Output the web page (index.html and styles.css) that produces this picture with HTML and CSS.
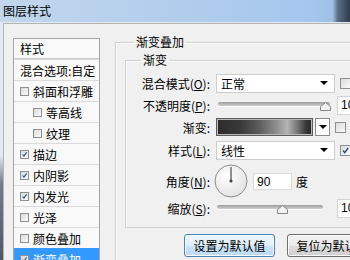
FILE: index.html
```html
<!DOCTYPE html>
<html lang="zh-CN">
<head>
    <meta charset="UTF-8">
    <title>图层样式</title>
    <link rel="stylesheet" href="styles.css">
</head>
<body>
    <div class="window">
        <!-- 标题栏 -->
        <div class="titlebar">图层样式</div>

        <div class="frame">
            <div class="panel">
                <!-- 左侧样式列表 -->
                <div class="side">
                    <div class="styles-list">
                        <div class="list-head">样式</div>
                        <div class="list-item">混合选项:自定</div>
                        <div class="list-item"><span class="cb"></span>斜面和浮雕</div>
                        <div class="list-item sub"><span class="cb"></span>等高线</div>
                        <div class="list-item sub"><span class="cb"></span>纹理</div>
                        <div class="list-item"><span class="cb on"><svg viewBox="0 0 9 9"><path d="M2 4.5 L3.8 6.6 L7.2 1.8"/></svg></span>描边</div>
                        <div class="list-item"><span class="cb on"><svg viewBox="0 0 9 9"><path d="M2 4.5 L3.8 6.6 L7.2 1.8"/></svg></span>内阴影</div>
                        <div class="list-item"><span class="cb on"><svg viewBox="0 0 9 9"><path d="M2 4.5 L3.8 6.6 L7.2 1.8"/></svg></span>内发光</div>
                        <div class="list-item"><span class="cb"></span>光泽</div>
                        <div class="list-item"><span class="cb"></span>颜色叠加</div>
                        <div class="list-item selected"><span class="cb on"><svg viewBox="0 0 9 9"><path d="M2 4.5 L3.8 6.6 L7.2 1.8"/></svg></span>渐变叠加</div>
                    </div>
                </div>

                <!-- 右侧设置 -->
                <div class="main">
                    <fieldset class="group">
                        <legend>渐变叠加</legend>
                        <fieldset class="group inner">
                            <legend>渐变</legend>

                            <div class="row r1">
                                <label class="lbl">混合模式(<u>O</u>):</label>
                                <div class="select"><span>正常</span><i class="arrow"></i></div>
                                <span class="cb big"></span>
                            </div>

                            <div class="row r2">
                                <label class="lbl">不透明度(<u>P</u>):</label>
                                <div class="slider opacity">
                                    <div class="track"></div>
                                    <svg class="thumb" style="left: 102px" viewBox="0 0 11 9"><path d="M5.5 0.5 L10.5 4.5 L10.5 8.5 L0.5 8.5 L0.5 4.5 Z"/></svg>
                                </div>
                                <div class="num first">10</div>
                            </div>

                            <div class="row r3">
                                <label class="lbl">渐变:</label>
                                <div class="swatch"></div>
                                <div class="swatch-btn"><i class="arrow"></i></div>
                                <span class="cb big"></span>
                            </div>

                            <div class="row r4">
                                <label class="lbl">样式(<u>L</u>):</label>
                                <div class="select"><span>线性</span><i class="arrow"></i></div>
                                <span class="cb big on"><svg viewBox="0 0 9 9"><path d="M2 4.5 L3.8 6.6 L7.2 1.8"/></svg></span>
                            </div>

                            <div class="row r5">
                                <label class="lbl">角度(<u>N</u>):</label>
                                <svg class="dial" viewBox="0 0 34 34">
                                    <defs>
                                        <radialGradient id="dialbg" cx="0.4" cy="0.35" r="0.7">
                                            <stop offset="0" stop-color="#ffffff"/>
                                            <stop offset="1" stop-color="#e2e2e2"/>
                                        </radialGradient>
                                    </defs>
                                    <circle cx="17" cy="17" r="16" fill="url(#dialbg)" stroke="#8c8c8c"/>
                                    <line x1="17" y1="17" x2="17" y2="3" stroke="#555" stroke-width="1.3"/>
                                    <circle cx="17" cy="17" r="1.6" fill="#444"/>
                                </svg>
                                <div class="angle">90</div>
                                <span class="unit">度</span>
                            </div>

                            <div class="row r6">
                                <label class="lbl">缩放(<u>S</u>):</label>
                                <div class="slider scale">
                                    <div class="track"></div>
                                    <svg class="thumb" style="left: 60px" viewBox="0 0 11 9"><path d="M5.5 0.5 L10.5 4.5 L10.5 8.5 L0.5 8.5 L0.5 4.5 Z"/></svg>
                                </div>
                                <div class="num">10</div>
                            </div>
                        </fieldset>

                        <div class="buttons">
                            <button class="btn default">设置为默认值</button>
                            <button class="btn">复位为默认值</button>
                        </div>
                    </fieldset>
                </div>
            </div>
        </div>
    </div>
</body>
</html>
```

FILE: styles.css
```css
/* 图层样式对话框 */
html, body {
    margin: 0;
    padding: 0;
    width: 350px;
    height: 260px;
    overflow: hidden;
    font-family: "Noto Sans CJK SC", "Liberation Sans", sans-serif;
    font-size: 12px;
    color: #000;
    background: #f0f0f0;
}

.window {
    width: 350px;
    height: 260px;
    display: flex;
    flex-direction: column;
    overflow: hidden;
}

.titlebar {
    height: 22px;
    line-height: 22px;
    padding-left: 3px;
    flex-shrink: 0;
    background: linear-gradient(90deg, #c2d7ed 0%, #b2cdec 50%, #a5c7ee 88%, #a0c0e6 95%, #5d6f84 96.5%, #2f3d4e 100%);
}

.frame {
    flex: 1;
    padding: 1px 0 0 3px;
    background: linear-gradient(#e4e9ef 0%, #e4e9ef 56%, #737d89 68%, #4f5965 100%);
    display: flex;
    min-height: 0;
}

.panel {
    flex: 1;
    display: flex;
    background: #f0f0f0;
    border-top: 1px solid #b4b4b4;
    border-left: 1px solid #b4b4b4;
    min-width: 0;
}

/* 左侧列表 */
.side {
    width: 87px;
    flex-shrink: 0;
    padding: 14px 0 0 9px;
}

.styles-list {
    border: 1px solid #a5a5a5;
    background: #f9f9f9;
    height: 240px;
}

.list-head {
    height: 19px;
    line-height: 19px;
    padding-left: 6px;
    border-bottom: 1px solid #c9c9c9;
}

.list-item {
    height: 20px;
    border-top: 1px solid #dadada;
    display: flex;
    align-items: center;
    padding-left: 6px;
    white-space: nowrap;
}

.list-item.sub {
    padding-left: 19px;
}

.list-item.selected {
    background: #3399ff;
    color: #fff;
    border-top-color: #3399ff;
}

.cb {
    width: 9px;
    height: 9px;
    box-sizing: border-box;
    border: 1px solid #8e8f8f;
    background: linear-gradient(135deg, #dadada, #fbfbfb);
    margin-right: 4px;
    flex-shrink: 0;
    display: flex;
}

.cb svg {
    width: 100%;
    height: 100%;
}

.cb svg path {
    fill: none;
    stroke: #2a4d7d;
    stroke-width: 1.4;
}

.cb.big {
    width: 11px;
    height: 11px;
    margin: 0 0 0 5px;
}

/* 右侧设置区 */
.main {
    width: 260px;
    flex-shrink: 0;
    margin-left: 15px;
    padding-top: 10px;
}

.group {
    margin: 0;
    min-width: 0;
    padding: 2px 0 0 9px;
    border: 1px solid #cfcfcf;
    box-shadow: inset 1px 1px 0 #fff;
    height: 240px;
    box-sizing: border-box;
}

.group legend {
    margin-left: 9px;
    padding: 0 2px;
    line-height: 16px;
}

.group.inner {
    padding: 5px 0 9px 0;
    height: auto;
}

.group.inner legend {
    margin-left: 15px;
}

.row {
    height: 20px;
    display: flex;
    align-items: center;
}

.r2, .r3 { margin-top: 2px; }
.r4 { margin-top: 3px; }
.r5 { margin-top: 4px; height: 34px; }

.lbl {
    width: 84px;
    text-align: right;
    flex-shrink: 0;
    white-space: nowrap;
}

.select {
    width: 119px;
    height: 19px;
    box-sizing: border-box;
    margin-left: 6px;
    border: 1px solid #cdcdcd;
    background: #fff;
    display: flex;
    align-items: center;
    justify-content: space-between;
    padding: 0 6px 0 4px;
}

.arrow {
    width: 0;
    height: 0;
    border-left: 4px solid transparent;
    border-right: 4px solid transparent;
    border-top: 4px solid #000;
}

.slider {
    position: relative;
    height: 12px;
    margin-left: 8px;
}

.slider.opacity { width: 112px; }
.slider.scale { width: 106px; margin-left: 7px; }

.track {
    margin-top: 3px;
    height: 4px;
    border-radius: 2px;
    background: linear-gradient(#9c9c9c, #cfcfcf);
    box-shadow: 0 1px 0 #fff;
}

.thumb {
    position: absolute;
    top: 3px;
    width: 11px;
    height: 9px;
}

.thumb path {
    fill: #f2f2f2;
    stroke: #858585;
}

.num {
    width: 30px;
    height: 17px;
    line-height: 17px;
    margin-left: 14px;
    padding-left: 3px;
    background: #fff;
    border: 1px solid #d4d4d4;
    font-family: "Liberation Sans", sans-serif;
    flex-shrink: 0;
}

.num.first {
    margin-left: 7px;
}

.swatch {
    width: 97px;
    height: 18px;
    box-sizing: border-box;
    margin-left: 6px;
    border: 1px solid #5c5c5c;
    box-shadow: inset 0 0 0 1px #b8b8b8;
    background: linear-gradient(90deg, #2b2b2b 0%, #3a3a3a 25%, #5e5e5e 45%, #8c8c8c 62%, #b4b4b4 74%, #7a7a7a 84%, #3d3d3d 93%, #222 100%);
}

.swatch-btn {
    width: 15px;
    height: 18px;
    box-sizing: border-box;
    margin-left: 2px;
    border: 1px solid #8a8a8a;
    background: #fff;
    display: flex;
    align-items: center;
    justify-content: center;
}

.dial {
    width: 34px;
    height: 34px;
    margin-left: 4px;
    flex-shrink: 0;
}

.angle {
    width: 39px;
    height: 17px;
    line-height: 17px;
    box-sizing: border-box;
    margin-left: 5px;
    padding-left: 3px;
    background: #fff;
    border: 1px solid #dadada;
    font-family: "Liberation Sans", sans-serif;
}

.unit {
    margin-left: 4px;
}

/* 底部按钮 */
.buttons {
    display: flex;
    gap: 12px;
    margin: 6px 0 0 59px;
}

.btn {
    width: 91px;
    height: 23px;
    flex-shrink: 0;
    padding: 0;
    font-family: "Noto Sans CJK SC", sans-serif;
    font-size: 12px;
    color: #000;
    border: 1px solid #707070;
    border-radius: 3px;
    background: linear-gradient(#f2f2f2 0%, #ebebeb 50%, #dddddd 51%, #cfcfcf 100%);
    box-shadow: inset 0 0 0 1px #fcfcfc;
}

.btn.default {
    border-color: #4a86b8;
    background: linear-gradient(#eef6fc 0%, #e0eef9 50%, #cde4f6 51%, #bcdaf2 100%);
}
```
